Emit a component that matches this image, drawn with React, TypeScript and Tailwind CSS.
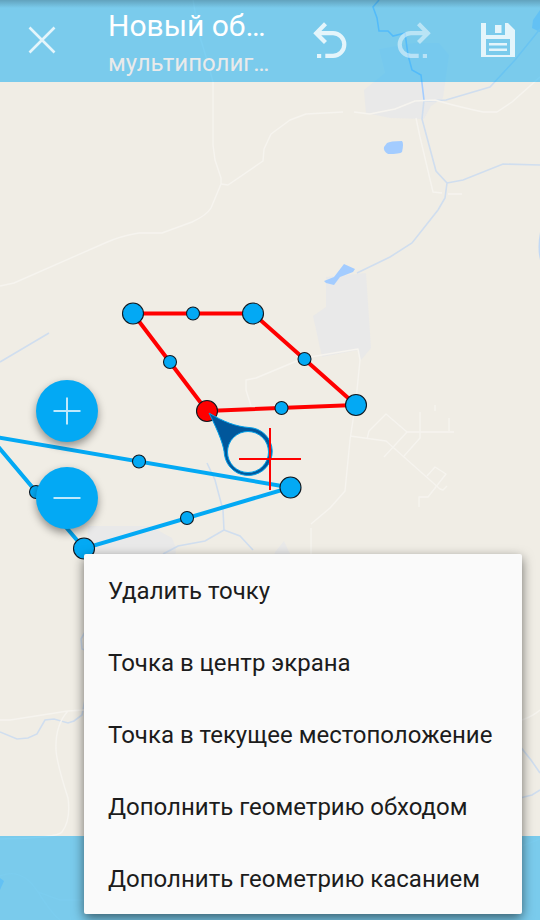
import React from "react";

const menuItems = [
  "Удалить точку",
  "Точка в центр экрана",
  "Точка в текущее местоположение",
  "Дополнить геометрию обходом",
  "Дополнить геометрию касанием",
];

type Point = [number, number];

const redVertices: Point[] = [[133, 313.5], [253, 313.5], [356, 405]];
const blueVertices: Point[] = [[290.5, 487.5], [84, 548.5]];
const midpoints: Point[] = [
  [193, 313.5],
  [304.5, 359],
  [281.5, 408],
  [170, 362],
  [139, 461.5],
  [187, 518],
  [36, 492],
];

function MapCanvas() {
  return (
    <svg
      className="absolute inset-0 h-full w-full"
      viewBox="0 0 540 920"
      preserveAspectRatio="xMidYMid slice"
      aria-hidden="true"
    >
      <rect width="540" height="920" fill="#f0ede5" />

      <g fill="#e9e9e9">
        <path d="M379 49 L414 43 L439 43 L449 55 L443 98 L431 106 L424 119 L390 118 L366 113 L364 90 L385 73 Z" />
        <path d="M326 277 L366 273 L371 348 L361 360 L358 350 L322 357 L313 316 L326 307 Z" />
        <path d="M88 526 L150 526 L172 538 L176 548 L172 600 L84 600 Z" />
        <path d="M275 552 L284 541 L290 554 L290 570 L270 570 Z" />
      </g>

      <g fill="#a3ccff">
        <path d="M387 143 Q390 141 402 141 Q404 143 402 152 Q400 154 388 154 Q383 151 384 147 Z" />
        <path d="M324 281 L334 277 L344 264 L355 269 L353 272 L340 277 L334 285 L326 283 Z" />
        <path d="M540 10 L533 20 L532 28 L540 32 Z M540 232 Q537 248 540 260 Z" opacity="0.6" />
        <path d="M0 878 L4 881 L0 890 Z" opacity="0.6" />
      </g>

      <g fill="none" stroke="#d0deef" strokeWidth="1.6">
        <path
          d="M379 0 L373 7 L377 18 L379 31 L388 31 L393 36 L405 33 L408 55 L412 70 L421 75 L424 100"
          stroke="#a3ccff"
        />
        <path d="M424 100 L422 119 L436 171 L447 183 L445 198 L438 210 L412 243 L390 257 L357 273" />
        <path d="M424 101 L446 100 L490 87 L515 60 L540 29" />
        <path d="M447 183 L463 180 L503 164 L540 165" />
        <path d="M0 362 L49 333" />
        <path d="M207 463 L215 480 L223 510 L224 530 L205 541 L178 546 L163 554" />
        <path d="M224 530 L240 536 L253 550" />
        <path d="M0 732 L17 739 L28 738 L37 734 L45 720 L54 719 L68 723 L74 721 L82 715 L86 695" />
        <path d="M85 632 L81 639 L82 649 L88 651" />
        <path d="M515 740 L531 760 L540 773 M520 798 L532 795 L540 790" />
      </g>

      <g fill="none" stroke="#f6f4ef" strokeWidth="1.4" strokeLinejoin="round">
        <path d="M193 0 L199 34 L208 63 L213 82 L213 145 L215 160 L221 178 L221 184 L211 208 Q207 215 192 222 L162 233 L139 233 Q120 236 105 243 L14 283 L0 286" />
        <path d="M221 184 L228 185 L263 161 L264 149 L271 134 L290 120 L306 114 L343 112 M354 112 L370 114 L395 109 L415 101 L435 100 Q455 106 483 112 L497 112 L512 102 L540 77" />
        <path d="M416 118 L420 137 L433 192 L442 193 M448 194 L462 194" />
        <path d="M251 406 L246 390 L246 380 L256 378 L292 363 L304 358 L358 349 L360 360 L356 400 L350 440 L345 491 L330 508 L311 524 M311 528 V556" />
        <path d="M350 436 L386 441 L404 457 L440 489 L443 490 L447 486" />
        <path d="M367 439 L369 431 L386 414 L407 432 L384 457 M407 432 H454 M420 412 V438 L404 456 M435 405 V411 M449 418 V431" />
        <path d="M427 476 L435 467 L446 474 L428 497 L419 497 V507" />
        <path d="M0 720 H10 L68 711 L84 710 M68 711 Q55 725 56 750 Q57 764 68 798 Q71 820 62 832 Q58 838 0 839" />
        <path
          d="M0 876 Q22 867 38 892 Q52 914 60 920 M38 892 L60 900 L84 900 M522 846 L540 839"
          opacity="0.5"
        />
        <path d="M522 720 Q533 716 540 710" />
      </g>

      <path d="M-10 436 L290.5 487.5 L84 548.5 L-10 437" fill="none" stroke="#03a9f4" strokeWidth="4" />
      <path
        d="M207 411 L133 313.5 H253 L356 405 Z"
        fill="none"
        stroke="#ff0000"
        strokeWidth="4"
      />

      <g fill="#03a9f4" stroke="#101820" strokeWidth="1.1">
        {midpoints.map(([x, y]) => (
          <circle key={`${x}-${y}`} cx={x} cy={y} r="6.5" />
        ))}
        {[...redVertices, ...blueVertices].map(([x, y]) => (
          <circle key={`${x}-${y}`} cx={x} cy={y} r="10.5" />
        ))}
        <circle cx="207" cy="411" r="10.5" fill="#ff0000" />
      </g>

      <path
        fill="#01579b"
        stroke="#03a0e8"
        strokeWidth="1"
        d="M209 413 C224 422 236 426.500 249 427.500 A24 24 0 1 1 224.500 455 C224 446 219 433 209 413 Z"
      />
      <circle cx="248" cy="452" r="20.500" fill="#f0ede5" stroke="#03a0e8" strokeWidth="1" />
      <path d="M239 459 H301 M270 428 V490" stroke="#ff0000" strokeWidth="2" />
    </svg>
  );
}

function CloseIcon() {
  return (
    <svg width="28" height="28" viewBox="0 0 28 28" fill="none" stroke="currentColor" strokeWidth="2.6">
      <path d="M1.500 1.500 L26.500 26.500 M26.500 1.500 L1.500 26.500" />
    </svg>
  );
}

function UndoIcon({ className = "" }: { className?: string }) {
  return (
    <svg className={className} width="36" height="38" viewBox="0 0 36 38" fill="none" stroke="currentColor" strokeWidth="4.2">
      <path d="M13.500 2.800 L4.200 12.200 L13.500 21.600 M4 12.200 H21 a11.300 11.300 0 0 1 0 22.600 H13.300" />
      <rect x="5" y="33" width="4.200" height="4" fill="currentColor" stroke="none" />
    </svg>
  );
}

function SaveIcon() {
  return (
    <svg width="36" height="36" viewBox="0 0 36 36" fill="currentColor">
      <path
        fillRule="evenodd"
        d="M1 1 H6 V13 H25 V1 H28 L35 8 V35 H1 Z M6 17 V33 H30 V17 Z"
      />
      <rect x="15" y="3" width="6.500" height="8" />
      <path d="M9 21 H27 V23.500 H9 Z M9 26.500 H27 V29 H9 Z" />
    </svg>
  );
}

const barButton = "flex h-16 w-[84px] shrink-0 items-center justify-center text-white/80";
const zoomButton =
  "flex size-[62px] items-center justify-center rounded-full bg-[#03a9f4] text-white/75 shadow-[0_4px_8px_rgba(0,0,0,0.4)]";

export default function App() {
  return (
    <div className="relative flex min-h-screen flex-col overflow-hidden bg-[#f0ede5] font-['Roboto','Noto_Sans',sans-serif]">
      <MapCanvas />

      <header className="relative flex h-[82px] items-center bg-[#03a9f4]/50 pb-0.5">
        <div className="absolute inset-x-0 top-0 h-2 bg-linear-to-b from-black/20 to-transparent" />
        <button type="button" aria-label="Закрыть" className={barButton}>
          <CloseIcon />
        </button>
        <div className="ml-6 min-w-0 flex-1 pt-1.5 whitespace-nowrap">
          <h1 className="text-[30px] leading-10 text-white">Новый об…</h1>
          <p className="text-2xl leading-[34px] text-[#eaeaea]">мультиполиг…</p>
        </div>
        <button type="button" aria-label="Отменить" className={barButton}>
          <UndoIcon />
        </button>
        <button type="button" aria-label="Повторить" className={barButton}>
          <UndoIcon className="-scale-x-100 opacity-60" />
        </button>
        <button type="button" aria-label="Сохранить" className={barButton}>
          <SaveIcon />
        </button>
      </header>

      <main className="relative flex flex-1 flex-col justify-center gap-[25px] pb-[9px] pl-9">
        <button type="button" aria-label="Приблизить" className={zoomButton}>
          <svg width="28" height="28" viewBox="0 0 28 28" stroke="currentColor" strokeWidth="2">
            <path d="M0.500 14 H27.500 M14 0.500 V27.500" />
          </svg>
        </button>
        <button type="button" aria-label="Отдалить" className={zoomButton}>
          <svg width="28" height="28" viewBox="0 0 28 28" stroke="currentColor" strokeWidth="2">
            <path d="M0.500 14 H27.500" />
          </svg>
        </button>
      </main>

      <footer className="relative h-[84px] bg-[#03a9f4]/50" />

      <div
        role="menu"
        className="absolute right-[18px] bottom-1.5 flex w-[438px] flex-col rounded-xs bg-[#fafafa] shadow-[0_4px_12px_rgba(0,0,0,0.55)]"
      >
        {menuItems.map((label) => (
          <button
            key={label}
            type="button"
            role="menuitem"
            className="h-[72px] px-6 pt-0.5 text-left text-2xl whitespace-nowrap text-[#1c1c1c]"
          >
            {label}
          </button>
        ))}
      </div>
    </div>
  );
}
